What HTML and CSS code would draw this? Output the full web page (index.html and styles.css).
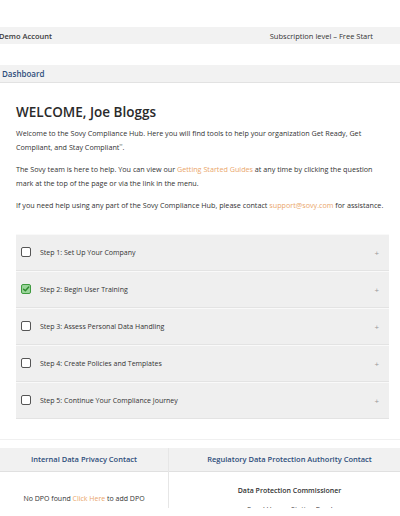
FILE: index.html
```html
<!DOCTYPE html>
<html lang="en">
<head>
  <meta charset="UTF-8">
  <meta name="viewport" content="width=device-width, initial-scale=1.0">
  <title>Dashboard - Sovy Compliance Hub</title>
  <link rel="stylesheet" href="styles.css">
</head>
<body>

<div class="pagina">
  <div class="barra-cuenta">
    <span class="cuenta">Demo Account</span>
    <span class="nivel">Subscription level – Free Start</span>
  </div>

  <div class="barra-nav">
    <span>Dashboard</span>
  </div>

  <div class="contenido">
    <h1>WELCOME, Joe Bloggs</h1>
    <p>Welcome to the Sovy Compliance Hub. Here you will find tools to help your organization Get Ready, Get Compliant, and Stay Compliant<sup>℠</sup>.</p>
    <p>The Sovy team is here to help. You can view our <a href="#">Getting Started Guides</a> at any time by clicking the question mark at the top of the page or via the link in the menu.</p>
    <p>If you need help using any part of the Sovy Compliance Hub, please contact <a href="#">support@sovy.com</a> for assistance.</p>

    <div class="pasos">
      <div class="paso">
        <span class="caja"></span>
        <span class="titulo">Step 1: Set Up Your Company</span>
        <span class="mas">+</span>
      </div>
      <div class="paso">
        <span class="caja hecha">
          <svg viewBox="0 0 10 10" width="10" height="10"><path d="M2 5.2 L4.2 7.2 L8.4 2.6" fill="none" stroke="#2f8a2f" stroke-width="1.8" stroke-linecap="round" stroke-linejoin="round"/></svg>
        </span>
        <span class="titulo">Step 2: Begin User Training</span>
        <span class="mas">+</span>
      </div>
      <div class="paso">
        <span class="caja"></span>
        <span class="titulo">Step 3: Assess Personal Data Handling</span>
        <span class="mas">+</span>
      </div>
      <div class="paso">
        <span class="caja"></span>
        <span class="titulo">Step 4: Create Policies and Templates</span>
        <span class="mas">+</span>
      </div>
      <div class="paso">
        <span class="caja"></span>
        <span class="titulo">Step 5: Continue Your Compliance Journey</span>
        <span class="mas">+</span>
      </div>
    </div>
  </div>

  <div class="contactos">
    <div class="col izq">
      <div class="cabecera">Internal Data Privacy Contact</div>
      <div class="cuerpo">
        <p class="sin-dpo">No DPO found <a href="#">Click Here</a> to add DPO</p>
      </div>
    </div>
    <div class="col der">
      <div class="cabecera">Regulatory Data Protection Authority Contact</div>
      <div class="cuerpo">
        <p class="nombre">Data Protection Commissioner</p>
        <p>Canal House, Station Road</p>
      </div>
    </div>
  </div>
</div>

</body>
</html>
```

FILE: styles.css
```css
body { margin: 0; font-family: "Open Sans", "Liberation Sans", sans-serif; color: #333; background: white; }
.pagina { height: 508px; overflow: hidden; background: white; }

.barra-cuenta {
  margin-top: 27px; height: 17px; background: #f2f2f2;
  display: flex; align-items: center; justify-content: space-between;
  padding: 0 27px 0 0; font-size: 7.5px; color: #333;
}
.cuenta { font-weight: 600; margin-left: -1px; color: #3a3a3a; }

.barra-nav {
  margin-top: 21px; height: 17px; background: #f2f2f2;
  border-bottom: 1px solid #e2e2e2;
  display: flex; align-items: center; padding-left: 2px;
  font-size: 8px; font-weight: 600; color: #2d4d7b;
}

.contenido { padding: 0 11px 0 16px; }
h1 { margin: 20px 0 6px; font-size: 13.5px; line-height: 18px; font-weight: 600; color: #2a2a2a; }
.contenido p { margin: 0 0 9px; font-size: 7.2px; line-height: 13.5px; color: #333; }
sup { font-size: 4px; line-height: 0; vertical-align: 3px; }
a { color: #eaa66b; text-decoration: none; }

.pasos { margin-top: 21px; }
.paso {
  height: 35px; background: #efefef;
  border-bottom: 1px solid #e3e3e3; border-top: 1px solid #f9f9f9;
  display: flex; align-items: center; padding: 0 10px 0 5px;
  font-size: 7px; color: #333;
}
.caja {
  width: 8px; height: 8px; border: 1.5px solid #555; border-radius: 2px;
  background: white; display: flex; align-items: center; justify-content: center;
}
.caja.hecha { background: #9ad59a; border-color: #3f9a3f; }
.caja.hecha svg { display: block; }
.titulo { margin-left: 9px; flex: 1; }
.mas { color: #999; font-size: 8px; }

.contactos {
  margin-top: 20px; border-top: 1px solid #f0f0f0;
  padding-top: 8px; display: flex;
}
.col { display: flex; flex-direction: column; }
.izq { width: 168px; }
.der { flex: 1; border-left: 1px solid #e6e6e6; }
.cabecera {
  height: 23px; background: #f1f1f1; border-bottom: 1px solid #e0e0e0;
  display: flex; align-items: center; justify-content: center;
  font-size: 7.5px; font-weight: 600; color: #2d4d7b;
}
.der .cabecera { padding-left: 10px; }
.cuerpo { text-align: center; font-size: 7px; height: 60px; }
.der .cuerpo { padding-left: 10px; }
.cuerpo p { margin: 0; line-height: 19px; }
.sin-dpo { margin-top: 17px !important; }
.nombre { margin-top: 9px !important; font-weight: 600; }
```
